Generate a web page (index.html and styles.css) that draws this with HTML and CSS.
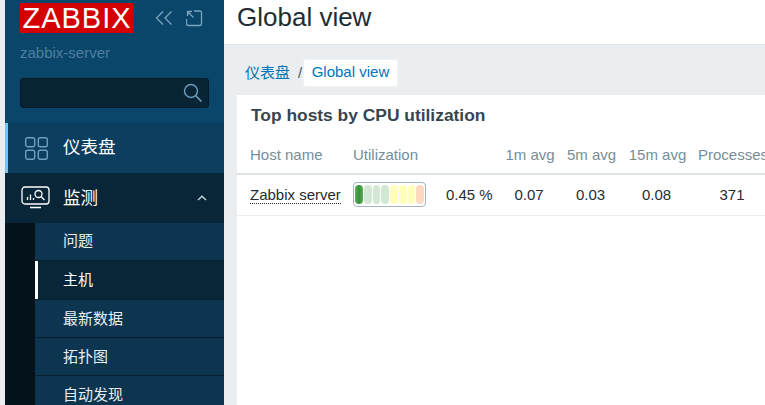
FILE: index.html
```html
<!DOCTYPE html>
<html lang="zh">
<head>
<meta charset="utf-8">
<title>Global view</title>
<link rel="stylesheet" href="styles.css">
</head>
<body>
<div class="app">
  <aside class="sidebar">
    <div class="brand">
      <div class="brand-row">
        <div class="logo">ZABBIX</div>
        <svg class="icon-collapse" width="18" height="16" viewBox="0 0 18 16"><path d="M8 1.500 1.500 8 8 14.500M16.500 1.500 10 8l6.500 6.500" fill="none" stroke="#7aa3bd" stroke-width="1.300"/></svg>
        <svg class="icon-kiosk" width="17" height="17" viewBox="0 0 17 17"><path d="M8 1h6a1.500 1.500 0 0 1 1.500 1.500V14a1.500 1.500 0 0 1-1.500 1.500H2A1.500 1.500 0 0 1 .5 14V9M1.500 6V1.500H6M1.500 1.500l6 6" fill="none" stroke="#7aa3bd" stroke-width="1.300"/></svg>
      </div>
      <div class="server">zabbix-server</div>
      <div class="search">
        <svg width="20" height="20" viewBox="0 0 20 20"><circle cx="8" cy="8" r="6.500" fill="none" stroke="#6f9fbe" stroke-width="1.400"/><path d="m12.800 12.800 5.700 5.700" stroke="#6f9fbe" stroke-width="1.600"/></svg>
      </div>
    </div>
    <nav class="menu">
      <a class="menu-item dash">
        <svg class="menu-icon" width="25" height="25" viewBox="0 0 25 25"><g fill="none" stroke="#6f9fbe" stroke-width="1.400"><rect x="1.700" y="1.700" width="9" height="9" rx="2"/><rect x="14.300" y="1.700" width="9" height="9" rx="2"/><rect x="1.700" y="14.300" width="9" height="9" rx="2"/><rect x="14.300" y="14.300" width="9" height="9" rx="2"/></g></svg>
        <span class="menu-label">仪表盘</span>
      </a>
      <a class="menu-item monitor">
        <svg class="menu-icon wide" width="29" height="24" viewBox="0 0 29 24"><g fill="none" stroke="#fff" stroke-width="1.300"><rect x="1" y="1" width="27" height="17" rx="3"/><path d="M9 21.500h11" stroke-width="1.500"/><circle cx="17.500" cy="8" r="3.500"/><path d="m20 10.500 3.500 3.500M6.500 14v-3M9.500 14V8.500M12.500 14v-2"/></g></svg>
        <span class="menu-label">监测</span>
        <svg class="chev" width="10" height="6" viewBox="0 0 10 6"><path d="M1 5 5 1.300 9 5" fill="none" stroke="#c5d2da" stroke-width="1.500"/></svg>
      </a>
      <div class="submenu">
        <a class="sub-item first">问题</a>
        <a class="sub-item current">主机</a>
        <a class="sub-item">最新数据</a>
        <a class="sub-item">拓扑图</a>
        <a class="sub-item">自动发现</a>
      </div>
    </nav>
  </aside>
  <main class="main">
    <header class="page-head"><h1>Global view</h1></header>
    <div class="content">
      <div class="crumbs">
        <a class="crumb">仪表盘</a>
        <span class="sep">/</span>
        <a class="crumb tab">Global view</a>
      </div>
      <section class="widget">
        <h2>Top hosts by CPU utilization</h2>
        <table class="hosts">
          <colgroup><col class="c-host"><col class="c-util"><col class="c-pct"><col class="c-m1"><col class="c-m5"><col class="c-m15"><col class="c-proc"></colgroup>
          <thead>
            <tr><th>Host name</th><th colspan="2">Utilization</th><th class="ctr">1m avg</th><th class="ctr">5m avg</th><th class="ctr">15m avg</th><th class="ctr">Processes</th></tr>
          </thead>
          <tbody>
            <tr>
              <td><a class="host">Zabbix server</a></td>
              <td>
                <div class="meter">
                  <i class="bar b-green"></i><i class="bar b-pale"></i><i class="bar b-pale"></i><i class="bar b-pale"></i><i class="bar b-yellow"></i><i class="bar b-yellow"></i><i class="bar b-yellow"></i><i class="bar b-orange"></i>
                </div>
              </td>
              <td class="pct">0.45 %</td>
              <td class="ctr">0.07</td>
              <td class="ctr">0.03</td>
              <td class="ctr">0.08</td>
              <td class="ctr">371</td>
            </tr>
          </tbody>
        </table>
      </section>
    </div>
  </main>
</div>
</body>
</html>
```
FILE: styles.css
```css
* { box-sizing: border-box; }
html, body { margin: 0; height: 405px; overflow: hidden; }
body {
  font-family: "Liberation Sans", "Noto Sans CJK SC", sans-serif;
  font-size: 15px;
  color: #1f2c33;
  background: #ebeef0;
}
a { display: block; }
.app { display: flex; width: 765px; height: 405px; padding-left: 5px; overflow: hidden; }

.sidebar { flex: 0 0 219px; background: #0a466a; display: flex; flex-direction: column; overflow: hidden; }
.brand { height: 123px; padding: 3px 15px 0; flex: none; }
.brand-row { display: flex; align-items: center; height: 30px; }
.logo {
  width: 114px; height: 30px; background: #d40000; color: #fff;
  font-size: 29px; line-height: 31px; text-align: center; letter-spacing: 1px;
}
.icon-collapse { margin-left: 21px; }
.icon-kiosk { margin-left: 13px; }
.server { margin-top: 11px; font-size: 15px; line-height: 18px; color: #4f7f9f; }
.search {
  margin-top: 16px; height: 30px; background: #082535; border: 1px solid #041a26; border-radius: 3px;
  display: flex; justify-content: flex-end; align-items: center; padding-right: 5px;
}

.menu { flex: 1; display: flex; flex-direction: column; }
.menu-item { height: 50px; display: flex; align-items: center; color: #fff; font-size: 17.500px; flex: none; }
.menu-label { padding-bottom: 3px; }
.menu-icon { flex: none; }
.menu-icon.wide { margin-left: 16px; margin-right: 13px; }
.dash { background: #0b3e5f; box-shadow: inset 3px 0 0 #7cc3f5; }
.dash .menu-label { padding-bottom: 5px; }
.dash .menu-icon { margin-left: 19px; margin-right: 14px; }
.monitor { background: #082638; }
.monitor .menu-label { flex: 1; }
.chev { margin-right: 17px; }
.submenu { flex: 1; background: #04131b; padding-left: 30px; }
.sub-item {
  height: 38px; line-height: 38px; padding-left: 28px; background: #0e3550; color: #e6edf1;
  font-size: 15px; border-bottom: 1px solid #062030;
}
.sub-item.first { line-height: 36px; }
.sub-item.current { height: 39px; line-height: 37px; background: #082638; color: #fff; box-shadow: inset 3px 0 0 #fff; }

.main { flex: 1; min-width: 0; display: flex; flex-direction: column; }
.page-head { height: 45px; background: #fff; border-bottom: 1px solid #dfe4e7; padding-left: 13px; flex: none; }
h1 { margin: 0; font-size: 26px; font-weight: 400; line-height: 34px; color: #1f2c33; white-space: nowrap; }
.content { flex: 1; padding: 15px 0 0 13px; overflow: hidden; }
.crumbs { display: flex; align-items: center; height: 26px; padding-left: 8px; color: #0275b8; line-height: 24px; }
.sep { margin: 0 2px 0 8px; color: #4a5b66; }
.crumb.tab { background: #fff; height: 26px; line-height: 24px; padding: 0 7.500px; border-radius: 2px; box-shadow: 0 0 0 1px #f1f3f5; }
.widget { margin-top: 9px; width: 545px; height: 320px; background: #fff; overflow: hidden; }
h2 { margin: 0; padding: 9px 0 0 14px; font-size: 17.400px; font-weight: 700; line-height: 22px; color: #374550; white-space: nowrap; }

.hosts { border-collapse: collapse; table-layout: fixed; width: 535px; margin-top: 9px; }
.c-host { width: 103px; } .c-util { width: 92px; } .c-pct { width: 66px; }
.c-m1 { width: 62px; } .c-m5 { width: 61px; } .c-m15 { width: 71px; } .c-proc { width: 80px; }
.hosts th {
  font-weight: 400; color: #768d99; text-align: left; height: 39px; padding: 0 0 0 13px;
  border-bottom: 2px solid #dfe4e7; white-space: nowrap;
}
.hosts td { height: 41px; padding: 0 0 0 13px; border-bottom: 1px solid #ebeef0; white-space: nowrap; }
.hosts .ctr { padding: 0; text-align: center; }
.hosts th.ctr { padding-left: 2px; }
.hosts .pct { padding-left: 14px; }
.host { display: inline; border-bottom: 1px dotted #1f2c33; color: #1f2c33; }
.meter {
  width: 73px; height: 25px; border: 1px solid #a4b4be; border-radius: 4px; padding: 2px 1px;
  display: flex; gap: 1px; background: #fff;
}
.bar { flex: 1; border-radius: 4px; filter: blur(0.5px); }
.b-green { background: linear-gradient(90deg, #58ad56, #37903a 50%, #58ad56); }
.b-pale { background: #d2e8d2; }
.b-yellow { background: #fefdbb; }
.b-orange { background: #fdd9c0; }
```
